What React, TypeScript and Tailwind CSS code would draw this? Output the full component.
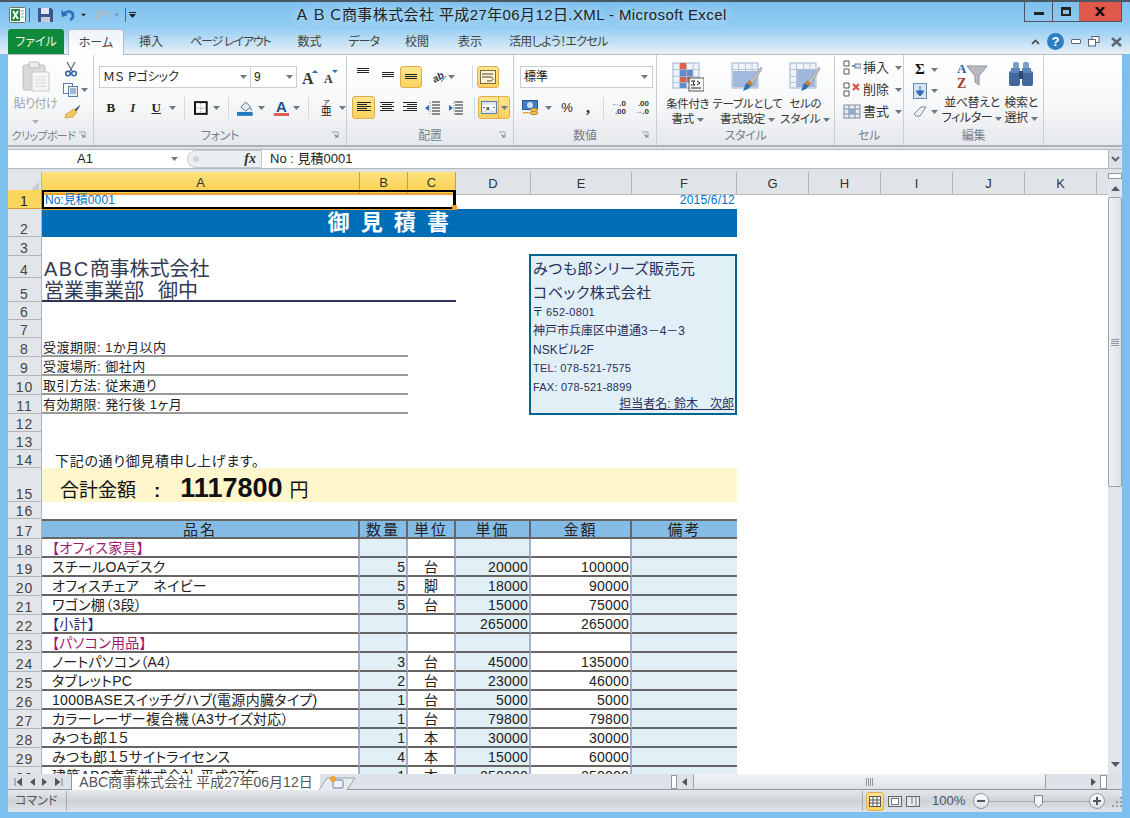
import type { ReactNode } from "react";

const items: { n: number; name?: string; kind?: "head" | "sub"; qty?: string; unit?: string; price?: string; amount?: string }[] = [
  { n: 18, name: "【オフィス家具】", kind: "head" },
  { n: 19, name: "スチールOAデスク", qty: "5", unit: "台", price: "20000", amount: "100000" },
  { n: 20, name: "オフィスチェア　ネイビー", qty: "5", unit: "脚", price: "18000", amount: "90000" },
  { n: 21, name: "ワゴン棚（3段）", qty: "5", unit: "台", price: "15000", amount: "75000" },
  { n: 22, name: "【小計】", kind: "sub", price: "265000", amount: "265000" },
  { n: 23, name: "【パソコン用品】", kind: "head" },
  { n: 24, name: "ノートパソコン（A4）", qty: "3", unit: "台", price: "45000", amount: "135000" },
  { n: 25, name: "タブレットPC", qty: "2", unit: "台", price: "23000", amount: "46000" },
  { n: 26, name: "1000BASEスイッチグハブ(電源内臓タイプ)", qty: "1", unit: "台", price: "5000", amount: "5000" },
  { n: 27, name: "カラーレーザー複合機（A3サイズ対応）", qty: "1", unit: "台", price: "79800", amount: "79800" },
  { n: 28, name: "みつも郎１５", qty: "1", unit: "本", price: "30000", amount: "30000" },
  { n: 29, name: "みつも郎１５サイトライセンス", qty: "4", unit: "本", price: "15000", amount: "60000" },
  { n: 30, name: "建築ABC商事株式会社 平成27年", qty: "1", unit: "本", price: "250000", amount: "250000" },
];

const tabs = [
  { label: "挿入", cls: "ml-[15px]" },
  { label: "ページ レイアウト", cls: "ml-[27px] tracking-[-1.2px]" },
  { label: "数式", cls: "ml-[27px]" },
  { label: "データ", cls: "ml-[27px] tracking-[-1px]" },
  { label: "校閲", cls: "ml-[26px]" },
  { label: "表示", cls: "ml-[29px]" },
  { label: "活用しよう！エクセル", cls: "ml-[27px] tracking-[-0.7px]" },
];

function Caret({ cls = "" }: { cls?: string }) {
  return (
    <svg width="7" height="4" viewBox="0 0 7 4" className={"shrink-0 " + cls}>
      <path d="M0 0h7L3.5 4z" fill="#6f7780" />
    </svg>
  );
}

function Lines({ rows, align, y = 0 }: { rows: number[]; align: "l" | "c" | "r"; y?: number }) {
  return (
    <svg width="16" height="14" viewBox="0 0 16 14">
      {rows.map((w, i) => {
        const x = align === "l" ? 1 : align === "c" ? 8 - w / 2 : 15 - w;
        return <rect key={i} x={x} y={y + i * 2 + 1} width={w} height="1" fill="#222" />;
      })}
    </svg>
  );
}

function Hi({ cls, children }: { cls: string; children: ReactNode }) {
  return (
    <div className={"flex items-center justify-center rounded-[3px] border border-[#e2ab4e] bg-gradient-to-b from-[#fde68f] to-[#fbd25c] " + cls}>
      {children}
    </div>
  );
}

function Sep({ cls = "" }: { cls?: string }) {
  return <div className={"h-[22px] w-px bg-[#d4d8dd] shrink-0 " + cls} />;
}

function Launcher() {
  return (
    <svg width="9" height="9" viewBox="0 0 9 9" className="absolute right-[6px] bottom-[5px]">
      <path d="M1 1h6v6" fill="none" stroke="#9aa4ae" />
      <path d="M3 3l3 3M4 6h2V4" fill="none" stroke="#6f7c8c" />
    </svg>
  );
}

function Group({ cls, label, launcher, children }: { cls: string; label: string; launcher?: boolean; children: ReactNode }) {
  return (
    <div className={"relative flex flex-col border-r border-[#c9ced4] shrink-0 " + cls}>
      <div className="flex-1 min-h-0">{children}</div>
      <div className="h-[20px] text-center text-[12px] leading-[22px] tracking-[-0.3px] whitespace-nowrap text-[#76828f]">
        <span className={label.length > 6 ? "mr-[14px] inline-block text-[11px] tracking-[-0.6px]" : ""}>{label}</span>
      </div>
      {launcher && <Launcher />}
    </div>
  );
}

function StyleIcon({ kind }: { kind: "cond" | "table" | "cell" }) {
  return (
    <svg width="32" height="30" viewBox="0 0 32 30">
      <rect x="1" y="1" width="26" height="25" fill="#eef3f9" stroke="#9db3cc" />
      {kind === "table" && <rect x="2" y="9" width="24" height="16" fill="#9db8dc" />}
      {kind === "cell" && <rect x="8" y="7" width="18" height="18" fill="#9db8dc" />}
      {kind === "cond" && (
        <>
          <rect x="8" y="1" width="7" height="7" fill="#dc5f50" />
          <rect x="8" y="8" width="13" height="7" fill="#5f8cc6" />
          <rect x="8" y="15" width="11" height="6" fill="#dc5f50" />
          <rect x="8" y="21" width="7" height="5" fill="#5f8cc6" />
        </>
      )}
      {[7.5, 14.5, 21].map((x) => (
        <path key={x} d={`M${x} 1v25`} stroke="#a9bdd4" strokeWidth="0.8" />
      ))}
      {[7.5, 14.5, 20.5].map((y) => (
        <path key={y} d={`M1 ${y}h26`} stroke="#a9bdd4" strokeWidth="0.8" />
      ))}
      {kind === "cond" ? (
        <>
          <rect x="17" y="16" width="15" height="13" fill="#f6f7f8" stroke="#555" />
          <path d="M19 19h4l-2 2 2 2h-4M25 19l3 2-3 2M19 26h10" fill="none" stroke="#222" />
        </>
      ) : (
        <>
          <path d="M30 5L19 19l3 3L31 7z" fill="#b9bdc4" stroke="#8c8f94" strokeWidth="0.5" />
          <path d="M18 18l4 4-2 2-5 3 1-6z" fill="#c77f2f" />
          <path d="M15 21l5 3-3 3-5 2z" fill="#2f6fb4" />
        </>
      )}
    </svg>
  );
}

function Ribbon() {
  return (
    <div className="flex h-[90px] shrink-0 bg-gradient-to-b from-[#ffffff] via-[#f8f9fa] to-[#e6e9ed] text-[12px] text-[#333]">
      <Group cls="w-[86px]" label="クリップボード" launcher>
        <div className="flex pt-[6px]">
          <div className="flex w-[55px] flex-col items-center">
            <svg width="28" height="31" viewBox="0 0 28 31">
              <rect x="1" y="4" width="22" height="25" rx="2" fill="#d9d9d9" stroke="#c1c1c1" />
              <rect x="7" y="1" width="10" height="6" rx="1" fill="#ececec" stroke="#bbb" />
              <rect x="10" y="11" width="17" height="19" fill="#f6f6f6" stroke="#c9c9c9" />
              <path d="M13 16h11M13 19h11M13 22h11M13 25h11" stroke="#d5d5d5" />
            </svg>
            <div className="mt-[3px] whitespace-nowrap tracking-[-0.5px] text-[#a2a2a2]">貼り付け</div>
            <Caret cls="mt-[7px] opacity-50" />
          </div>
          <div className="flex flex-col items-start">
            <svg width="14" height="16" viewBox="0 0 14 16" className="ml-[1px]">
              <path d="M3 1l5 9M11 1L6 10" stroke="#6b7280" strokeWidth="1.4" />
              <circle cx="4" cy="12.5" r="2.3" fill="none" stroke="#2e5fa8" strokeWidth="1.5" />
              <circle cx="10" cy="12.5" r="2.3" fill="none" stroke="#2e5fa8" strokeWidth="1.5" />
            </svg>
            <div className="mt-[6px] flex items-center">
              <svg width="16" height="14" viewBox="0 0 16 14">
                <rect x="0.5" y="0.5" width="9" height="10" fill="#fff" stroke="#5c7ea8" />
                <rect x="5.5" y="3.5" width="9" height="10" fill="#e7eef7" stroke="#5c7ea8" />
                <path d="M7 6h6M7 8h6M7 10h6" stroke="#5c7ea8" />
              </svg>
              <Caret cls="ml-[2px]" />
            </div>
            <svg width="18" height="15" viewBox="0 0 18 15" className="mt-[7px]">
              <path d="M17 1l-6 5 2 2 4-6z" fill="#46506a" />
              <path d="M11 5l3 3-4 5-8 1 1-4z" fill="#f0c860" stroke="#b88a2e" strokeWidth="0.6" />
            </svg>
          </div>
        </div>
      </Group>

      <Group cls="w-[253px]" label="フォント" launcher>
        <div className="pl-[5px] pt-[11px]">
          <div className="flex h-[22px] items-center">
            <div className="flex h-[22px] w-[152px] items-center justify-between border border-[#c9ced4] bg-white pl-[3px] pr-[3px] text-[12px] text-[#222]">
              ＭＳ Ｐゴシック
              <Caret />
            </div>
            <div className="flex h-[22px] w-[46px] items-center justify-between border border-l-0 border-[#c9ced4] bg-white pl-[3px] pr-[3px] text-[#222]">
              9
              <Caret />
            </div>
            <svg width="16" height="15" viewBox="0 0 16 15" className="ml-[5px]">
              <text x="0" y="14" fontSize="16" fontFamily="Liberation Serif" fontWeight="700" fill="#333">A</text>
              <path d="M10 3l3-3 3 3z" fill="#2e6fb4" />
            </svg>
            <svg width="15" height="14" viewBox="0 0 15 14" className="ml-[5px]">
              <text x="1" y="13" fontSize="12" fontFamily="Liberation Serif" fontWeight="700" fill="#333">A</text>
              <path d="M9 0l3 3 3-3z" fill="#2e6fb4" />
            </svg>
          </div>
          <div className="mt-[9px] flex h-[22px] items-center">
            <div className="w-[24px] text-center font-['Liberation_Serif'] text-[13px] font-bold text-[#222]">B</div>
            <div className="w-[21px] text-center font-['Liberation_Serif'] text-[13px] font-bold italic text-[#333]">I</div>
            <div className="w-[27px] text-center font-['Liberation_Serif'] text-[13px] font-bold text-[#222] underline">U</div>
            <Caret />
            <Sep cls="ml-[8px]" />
            <svg width="14" height="14" viewBox="0 0 14 14" className="ml-[9px]">
              <rect x="1" y="1" width="12" height="12" fill="#fff" stroke="#111" strokeWidth="2" />
              <path d="M7 2v10M2 7h10" stroke="#888" strokeDasharray="1 1" />
            </svg>
            <Caret cls="ml-[5px]" />
            <Sep cls="ml-[8px]" />
            <svg width="17" height="16" viewBox="0 0 17 16" className="ml-[8px]">
              <path d="M4 7l5-5 5 5-5 4z" fill="#e8edf3" stroke="#5c6a7c" />
              <path d="M14 7c1 2 2 3 1 4-1 0-2-2-1-4z" fill="#5c9cd6" />
              <rect x="0" y="12" width="16" height="4" fill="#1f7bc0" />
            </svg>
            <Caret cls="ml-[4px]" />
            <div className="relative ml-[9px] flex h-[16px] w-[16px] justify-center">
              <span className="font-['Liberation_Sans'] text-[15px] leading-[14px] font-bold text-[#1d4f91]">A</span>
              <div className="absolute inset-x-0 bottom-0 h-[3px] bg-[#e05a4e]" />
            </div>
            <Caret cls="ml-[4px]" />
            <Sep cls="ml-[8px]" />
            <div className="ml-[10px] flex w-[14px] flex-col items-center leading-none text-[#222]">
              <span className="text-[7px] leading-[7px]">ア</span>
              <span className="text-[11px] leading-[11px]">亜</span>
            </div>
            <Caret cls="ml-[6px]" />
          </div>
        </div>
      </Group>

      <Group cls="w-[167px]" label="配置" launcher>
        <div className="pl-[5px] pt-[11px]">
          <div className="flex h-[22px] items-center">
            <div className="flex w-[22px] justify-center">
              <div className="-mt-[6px]"><Lines rows={[12, 12, 12]} align="c" /></div>
            </div>
            <div className="flex w-[26px] justify-center pl-[2px]">
              <div className="mt-[2px]"><Lines rows={[12, 12, 12]} align="c" /></div>
            </div>
            <Hi cls="h-[22px] w-[22px] items-end">
              <div className="mt-[6px]"><Lines rows={[12, 12, 12]} align="c" /></div>
            </Hi>
            <svg width="16" height="14" viewBox="0 0 16 14" className="ml-[9px]">
              <text x="1" y="11" fontSize="10" fontFamily="Liberation Sans" fontStyle="italic" fontWeight="700" fill="#333" transform="rotate(-30 6 7)">ab</text>
              <path d="M10 12l5-6" stroke="#2e6fb4" />
            </svg>
            <Caret cls="ml-[1px]" />
            <Sep cls="ml-[17px]" />
            <Hi cls="ml-[4px] h-[22px] w-[22px]">
              <svg width="16" height="14" viewBox="0 0 16 14">
                <rect x="0.5" y="0.5" width="15" height="13" fill="#fdf3d0" stroke="#7a6a3a" />
                <path d="M2 4h11M2 7h8c4 0 4 4 0 4H7" fill="none" stroke="#444" />
              </svg>
            </Hi>
          </div>
          <div className="mt-[8px] flex h-[23px] items-center">
            <Hi cls="h-[23px] w-[23px]"><Lines rows={[14, 10, 14, 10, 14]} align="l" /></Hi>
            <div className="ml-[2px] flex w-[20px] justify-center"><Lines rows={[14, 10, 14, 10, 14]} align="c" /></div>
            <div className="ml-[3px] flex w-[20px] justify-center"><Lines rows={[14, 10, 14, 10, 14]} align="r" /></div>
            <svg width="16" height="14" viewBox="0 0 16 14" className="ml-[5px]">
              <path d="M7 1h8M7 4h8M7 7h8M7 10h8M7 13h8" stroke="#222" />
              <path d="M0 7l4-3v6z" fill="#2e6fb4" />
              <path d="M5 0v14" stroke="#888" strokeDasharray="1 1" />
            </svg>
            <svg width="16" height="14" viewBox="0 0 16 14" className="ml-[7px]">
              <path d="M7 1h8M7 4h8M7 7h8M7 10h8M7 13h8" stroke="#222" />
              <path d="M5 7L1 4v6z" fill="#2e6fb4" />
              <path d="M6 0v14" stroke="#888" strokeDasharray="1 1" />
            </svg>
            <Sep cls="ml-[10px]" />
            <div className="ml-[3px] flex h-[23px] w-[32px] rounded-[3px] border border-[#e2ab4e] bg-gradient-to-b from-[#fde68f] to-[#fbd25c]">
              <div className="flex w-[20px] items-center justify-center border-r border-[#e2ab4e]">
                <svg width="16" height="13" viewBox="0 0 16 13">
                  <rect x="0.5" y="0.5" width="15" height="12" fill="#dbe7f4" stroke="#5c7ea8" />
                  <rect x="1" y="4" width="14" height="5" fill="#fff" />
                  <text x="5" y="8.5" fontSize="6" fontFamily="Liberation Sans" fontWeight="700" fill="#222">a</text>
                  <path d="M2 6.5h2M12 6.5h2" stroke="#2e6fb4" />
                </svg>
              </div>
              <div className="flex flex-1 items-center justify-center"><Caret /></div>
            </div>
          </div>
        </div>
      </Group>

      <Group cls="w-[143px]" label="数値" launcher>
        <div className="pl-[6px] pt-[11px]">
          <div className="flex h-[22px] w-[133px] items-center justify-between border border-[#c9ced4] bg-white pl-[3px] pr-[4px] text-[#222]">
            標準
            <Caret />
          </div>
          <div className="mt-[9px] flex h-[22px] items-center">
            <svg width="18" height="16" viewBox="0 0 18 16" className="ml-[2px]">
              <rect x="0.5" y="0.5" width="15" height="9" fill="#3f7fc4" stroke="#29588f" />
              <circle cx="8" cy="5" r="3" fill="#cfe0f2" />
              <ellipse cx="12" cy="10" rx="4" ry="1.6" fill="#f0c050" stroke="#b88a2e" />
              <ellipse cx="12" cy="13" rx="4" ry="1.6" fill="#f0c050" stroke="#b88a2e" />
              <rect x="1" y="12" width="6" height="1.4" fill="#e0a030" />
            </svg>
            <Caret cls="ml-[5px]" />
            <div className="ml-[5px] w-[20px] text-center text-[13px] text-[#222]">%</div>
            <div className="ml-[4px] w-[14px] text-center font-['Liberation_Serif'] text-[16px] leading-[12px] font-bold text-[#222]">,</div>
            <Sep cls="ml-[8px]" />
            <div className="ml-[2px] flex w-[20px] flex-col items-end font-['Liberation_Sans'] text-[8px] leading-[8px] font-bold text-[#333]">
              <span><span className="text-[#2e6fb4]">←</span>.0</span>
              <span>.00</span>
            </div>
            <div className="ml-[3px] flex w-[20px] flex-col items-end font-['Liberation_Sans'] text-[8px] leading-[8px] font-bold text-[#333]">
              <span>.00</span>
              <span><span className="text-[#2e6fb4]">→</span>.0</span>
            </div>
          </div>
        </div>
      </Group>

      <Group cls="w-[178px]" label="スタイル">
        <div className="flex pt-[7px] text-center text-[11.5px] leading-[15px] tracking-[-0.3px]">
          <div className="flex w-[62px] flex-col items-center">
            <StyleIcon kind="cond" />
            <div className="mt-[5px] whitespace-nowrap">条件付き</div>
            <div className="flex items-center gap-[3px]">書式<Caret /></div>
          </div>
          <div className="flex w-[58px] flex-col items-center">
            <StyleIcon kind="table" />
            <div className="mt-[5px] whitespace-nowrap">テーブルとして</div>
            <div className="flex items-center gap-[3px] whitespace-nowrap">書式設定<Caret /></div>
          </div>
          <div className="flex w-[58px] flex-col items-center">
            <StyleIcon kind="cell" />
            <div className="mt-[5px] whitespace-nowrap">セルの</div>
            <div className="flex items-center gap-[3px] whitespace-nowrap">スタイル<Caret /></div>
          </div>
        </div>
      </Group>

      <Group cls="w-[69px]" label="セル">
        <div className="flex flex-col gap-[5px] pl-[8px] pt-[4px] text-[13px]">
          <div className="flex h-[17px] items-center">
            <svg width="18" height="15" viewBox="0 0 18 15">
              <path d="M1 1h5v5H1zM1 9h5v5H1z" fill="#fff" stroke="#555" />
              <path d="M9 6h4" stroke="#222" />
              <rect x="12" y="4" width="6" height="4" fill="#dfe7f2" stroke="#5c7ea8" />
            </svg>
            <span className="ml-[2px] whitespace-nowrap">挿入</span>
            <Caret cls="ml-[6px]" />
          </div>
          <div className="flex h-[17px] items-center">
            <svg width="18" height="15" viewBox="0 0 18 15">
              <path d="M1 1h5v5H1zM1 9h5v5H1z" fill="#fff" stroke="#555" />
              <path d="M10 2l6 6M16 2l-6 6" stroke="#d9503f" strokeWidth="2" />
            </svg>
            <span className="ml-[2px] whitespace-nowrap">削除</span>
            <Caret cls="ml-[6px]" />
          </div>
          <div className="flex h-[17px] items-center">
            <svg width="18" height="15" viewBox="0 0 18 15">
              <rect x="1" y="1" width="16" height="13" fill="#e8eef6" stroke="#7f8c9c" />
              <path d="M6 1v13M12 1v13M1 5h16M1 10h16" stroke="#7f8c9c" />
              <rect x="6" y="5" width="6" height="5" fill="#8fa9cc" />
            </svg>
            <span className="ml-[2px] whitespace-nowrap">書式</span>
            <Caret cls="ml-[6px]" />
          </div>
        </div>
      </Group>

      <Group cls="w-[140px]" label="編集">
        <div className="flex pt-[6px]">
          <div className="flex w-[40px] flex-col gap-[6px] pl-[9px] pt-[1px]">
            <div className="flex h-[15px] items-center">
              <span className="w-[14px] text-center font-['Liberation_Serif'] text-[15px] font-bold text-[#111]">Σ</span>
              <Caret cls="ml-[4px]" />
            </div>
            <div className="flex h-[15px] items-center">
              <svg width="14" height="16" viewBox="0 0 14 16">
                <rect x="0.5" y="0.5" width="13" height="15" fill="#d7e4f3" stroke="#6a8ab0" />
                <path d="M7 3v6M3 8h8L7 13z" fill="#2e6fb4" stroke="#2e6fb4" />
              </svg>
              <Caret cls="ml-[4px]" />
            </div>
            <div className="flex h-[15px] items-center">
              <svg width="14" height="12" viewBox="0 0 14 12">
                <path d="M1 8l7-7h5L7 10H3z" fill="#eef1f5" stroke="#7f8791" />
              </svg>
              <Caret cls="ml-[4px]" />
            </div>
          </div>
          <div className="flex w-[56px] flex-col items-center leading-[15px] tracking-[-0.4px]">
            <svg width="32" height="28" viewBox="0 0 32 28">
              <text x="1" y="12" fontSize="13" fontFamily="Liberation Serif" fontWeight="700" fill="#2e5fa8">A</text>
              <text x="1" y="27" fontSize="14" fontFamily="Liberation Serif" fontWeight="700" fill="#a83a30">Z</text>
              <path d="M11 5h20l-8 10v9l-4-3v-6z" fill="#b7bcc2" stroke="#8e949b" />
            </svg>
            <div className="mt-[7px] whitespace-nowrap">並べ替えと</div>
            <div className="flex items-center gap-[3px] whitespace-nowrap">フィルター<Caret /></div>
          </div>
          <div className="ml-[5px] flex w-[32px] flex-col items-center leading-[15px] tracking-[-0.4px]">
            <svg width="28" height="28" viewBox="0 0 28 28">
              <rect x="6" y="1" width="6" height="7" rx="2" fill="#7d9cc6" />
              <rect x="16" y="1" width="6" height="7" rx="2" fill="#7d9cc6" />
              <rect x="2" y="10" width="11" height="15" rx="2" fill="#41679c" />
              <rect x="15" y="10" width="11" height="15" rx="2" fill="#41679c" />
              <rect x="4" y="7" width="9" height="5" fill="#5f86bb" />
              <rect x="15" y="7" width="9" height="5" fill="#5f86bb" />
              <rect x="12" y="10" width="4" height="8" fill="#2d4a74" />
            </svg>
            <div className="mt-[7px] whitespace-nowrap">検索と</div>
            <div className="flex items-center gap-[3px] whitespace-nowrap">選択<Caret /></div>
          </div>
        </div>
      </Group>
      <div className="flex-1" />
    </div>
  );
}

function FormulaBar() {
  return (
    <div className="h-[27px] shrink-0 border-t-2 border-[#aeb3b9] bg-[#dfe3e8] pt-[2px]">
      <div className="flex h-[20px] items-stretch border-y border-[#b4b9bf] bg-white text-[14px] leading-[18px] text-[#222]">
        <div className="flex w-[179px] items-center">
          <div className="w-[154px] text-center text-[13px]">A1</div>
          <Caret cls="ml-[9px]" />
        </div>
        <div className="flex w-[75px] items-center bg-[#eceff2] rounded-l-full border border-[#c3c8ce]">
          <div className="ml-[5px] h-[6px] w-[6px] rounded-full bg-[#cfd4d9]" />
          <span className="ml-auto mr-[5px] font-['Liberation_Serif'] text-[14px] font-bold italic text-[#333]">fx</span>
        </div>
        <div className="flex-1 pl-[8px] text-[13px]">No : 見積0001</div>
        <div className="flex w-[14px] items-center justify-center border-l border-[#b4b9bf] bg-[#dfe3e8]">
          <svg width="9" height="6" viewBox="0 0 9 6"><path d="M1 1l3.5 3.5L8 1" fill="none" stroke="#606a75" strokeWidth="2" /></svg>
        </div>
      </div>
    </div>
  );
}

function RowHead({ n, active }: { n: number; active?: boolean }) {
  return (
    <div
      className={
        "flex min-h-0 items-end justify-center border-b border-r font-['Liberation_Sans'] text-[14px] leading-[14px] tracking-[1px] " +
        (active ? "border-[#d59a3e] bg-[#fbd65c] text-[#222]" : "border-[#b0b5ba] bg-[#e2e6eb] text-[#444]")
      }
    >
      {n}
    </div>
  );
}

// grid line is computed from the sheet row number
function Row({ n, active, children }: { n: number; active?: boolean; children?: ReactNode }) {
  return (
    <div className="col-span-full grid min-h-0 grid-cols-subgrid grid-rows-[minmax(0,1fr)]" style={{ gridRow: n + 1 }}>
      <RowHead n={n} active={active} />
      {children}
    </div>
  );
}

function Sheet() {
  const colHeads = ["A", "B", "C", "D", "E", "F", "G", "H", "I", "J", "K"];
  return (
    <div className="relative min-w-0 flex-1 overflow-hidden bg-white">
      <div className="grid grid-cols-[34px_318px_48px_48px_75px_101px_105px_72px_72px_72px_72px_72px_11px] grid-rows-[18px_19px_28px_19px_22px_24px_18px_18px_19px_19px_19px_19px_18px_18px_18px_34px_17px_20px_repeat(13,19px)]">
        <div className="col-span-full row-start-1 grid grid-cols-subgrid">
          <div className="flex items-end justify-end border-r border-b border-[#b0b5ba] bg-[#e2e6eb] p-[2px]">
            <svg width="10" height="10" viewBox="0 0 10 10"><path d="M10 0v10H0z" fill="#c4cad0" /></svg>
          </div>
          {colHeads.map((c, i) => (
            <div
              key={c}
              className={
                "flex items-center justify-center border-r pt-px font-['Liberation_Sans'] text-[13px] text-[#333] " +
                (i < 3
                  ? "border-[#d59a3e] border-b-2 border-b-[#f0a030] bg-gradient-to-b from-[#fde27c] to-[#fbd14f]"
                  : "border-[#b0b5ba] border-b bg-[#e0e4e9]")
              }
            >
              {c}
            </div>
          ))}
          <div className="border-b border-[#b0b5ba] bg-[#e0e4e9]" />
        </div>

        <Row n={1} active>
          <div className="relative z-10 col-span-3 flex items-center border-2 border-r-[3px] border-black pl-[1px] text-[12px] text-[#0070c0] shadow-[0_1px_0_#f0a030]">
            No:見積<span className="tracking-[.2px]">0001</span>
            <div className="absolute -right-[4px] -bottom-[3px] h-[5px] w-[5px] bg-[#f0a030]" />
          </div>
          <div className="col-start-6 col-span-2 flex items-center justify-end pr-[2px] text-[12px] tracking-[.2px] text-[#0070c0]">2015/6/12</div>
        </Row>
        <Row n={2}>
          <div className="col-span-6 flex min-h-0 items-center justify-center bg-[#006eb6] text-[22px] leading-none font-bold tracking-[2.5px] text-white">御 見 積 書</div>
        </Row>
        <Row n={3} />
        <Row n={4}>
          <div className="col-span-3 flex min-h-0 items-end pl-[2px] text-[20px] leading-[18px] text-[#333b55]"><span className="tracking-[1.5px]">ABC</span>商事株式会社</div>
        </Row>
        <Row n={5}>
          <div className="col-span-3 flex min-h-0 items-end border-b-2 border-[#2c3555] pl-[2px] text-[20px] leading-[18px] text-[#333b55]">営業事業部<span className="ml-[14px]">御中</span></div>
        </Row>
        <Row n={6} />
        <Row n={7} />
        {["受渡期限: 1か月以内", "受渡場所: 御社内", "取引方法: 従来通り", "有効期限: 発行後 1ヶ月"].map((t, i) => (
          <Row key={t} n={8 + i}>
            <div className="col-span-2 flex min-h-0 items-end border-b-2 border-[#999] pl-[1px] text-[13px] leading-[14px] tracking-[.5px] text-[#222]">{t}</div>
          </Row>
        ))}
        <Row n={12} />
        <Row n={13} />
        <Row n={14}>
          <div className="col-span-3 flex min-h-0 items-end pl-[13px] text-[14px] leading-[14px] tracking-[.7px] text-[#222]">下記の通り御見積申し上げます。</div>
        </Row>
        <Row n={15}>
          <div className="col-span-6 flex min-h-0 items-end bg-[#fff6cc] pl-[18px] text-[19px] leading-[22px] text-[#111]">
            合計金額
            <span className="ml-[18px] font-bold">:</span>
            <span className="ml-[20px] font-['Liberation_Sans'] text-[27px] leading-[28px] font-bold">1117800</span>
            <span className="ml-[7px]">円</span>
          </div>
        </Row>
        <Row n={16} />
        <Row n={17}>
          {["品名", "数量", "単位", "単価", "金額", "備考"].map((h, i) => (
            <div
              key={h}
              className={
                "flex min-h-0 items-center justify-center border-t-2 border-b-2 border-[#666] bg-[#85bce6] text-[15px] leading-none tracking-[2px] text-[#222] " +
                (i < 5 ? "border-r-2" : "")
              }
            >
              {h}
            </div>
          ))}
        </Row>
        {items.map((it) => (
          <Row key={it.n} n={it.n}>
            <div
              className={
                "flex min-h-0 items-center border-r-2 border-b-2 border-r-[#a9add0] border-b-[#666] pt-[2px] pl-[10px] text-[14px] leading-[15px] tracking-[.3px] whitespace-nowrap " +
                (it.kind === "head" ? "text-[#a0186e]" : it.kind === "sub" ? "text-[#1c2d80]" : "text-[#222]")
              }
            >
              {it.name}
            </div>
            <div className="flex min-h-0 items-center justify-end border-r-2 border-b-2 border-r-[#a9add0] border-b-[#666] bg-[#e1eff6] pt-[2px] pr-[1px] text-[14px] leading-[15px] text-[#222]">{it.qty}</div>
            <div className="flex min-h-0 items-center justify-center border-r-2 border-b-2 border-r-[#a9add0] border-b-[#666] pt-[2px] text-[14px] leading-[15px] text-[#222]">{it.unit}</div>
            <div className="flex min-h-0 items-center justify-end border-r-2 border-b-2 border-r-[#a9add0] border-b-[#666] bg-[#e1eff6] pt-[2px] pr-[1px] text-[14px] leading-[15px] tracking-[.2px] text-[#222]">{it.price}</div>
            <div className="flex min-h-0 items-center justify-end border-r-2 border-b-2 border-r-[#a9add0] border-b-[#666] pt-[2px] pr-[1px] text-[14px] leading-[15px] tracking-[.2px] text-[#222]">{it.amount}</div>
            <div className="min-h-0 border-b-2 border-b-[#666] bg-[#e1eff6]" />
          </Row>
        ))}

        <div className="z-10 col-start-6 col-span-2 row-start-5 row-span-8 -mt-[2px] -ml-[2px] -mb-[1px] flex flex-col border-2 border-[#00648f] bg-[#e1eff6] pl-[2px] text-[#2a2f5c]">
          <div className="h-[24px] text-[15px] leading-[26px] tracking-[.5px]">みつも郎シリーズ販売元</div>
          <div className="h-[24px] text-[15px] leading-[26px] tracking-[.5px]">コベック株式会社</div>
          <div className="h-[19px] text-[11px] leading-[17px] tracking-[.3px]">〒 652-0801</div>
          <div className="h-[19px] text-[12px] leading-[18px]">神戸市兵庫区中道通3－4－3</div>
          <div className="h-[19px] text-[12px] leading-[18px]">NSKビル2F</div>
          <div className="h-[19px] text-[11px] leading-[18px] tracking-[.2px]">TEL: 078-521-7575</div>
          <div className="h-[19px] text-[11px] leading-[18px] tracking-[.2px]">FAX: 078-521-8899</div>
          <div className="flex-1 pr-[1px] text-right text-[12px] leading-[17px] underline">担当者名: 鈴木　次郎</div>
        </div>
      </div>
    </div>
  );
}

function VScroll() {
  return (
    <div className="flex w-[14px] shrink-0 flex-col items-center bg-[#e2e6eb]">
      <div className="mt-px h-[6px] w-[14px] border border-[#8f979f] bg-white" />
      <div className="flex h-[18px] items-center justify-center">
        <svg width="9" height="5" viewBox="0 0 9 5"><path d="M0 5h9L4.5 0z" fill="#4f5a66" /></svg>
      </div>
      <div className="flex h-[290px] w-[14px] items-center justify-center rounded-[2px] border border-[#99a1a9] bg-gradient-to-r from-[#f0f2f5] to-[#dde1e6]">
        <svg width="8" height="7" viewBox="0 0 8 7"><path d="M0 .5h8M0 2.5h8M0 4.5h8M0 6.5h8" stroke="#8f979f" /></svg>
      </div>
      <div className="flex-1" />
      <div className="mb-[5px] flex h-[10px] items-center justify-center">
        <svg width="9" height="5" viewBox="0 0 9 5"><path d="M0 0h9L4.5 5z" fill="#4f5a66" /></svg>
      </div>
    </div>
  );
}

function SheetBar() {
  return (
    <div className="flex h-[16px] shrink-0 items-center border-b border-[#8f979f] bg-[#dde2e9]">
      <div className="flex w-[63px] items-center gap-[7px] pl-[6px]">
        <svg width="8" height="8" viewBox="0 0 8 8"><path d="M1 0v8M8 0v8L3 4z" fill="#555" stroke="#555" strokeWidth="0.7" /></svg>
        <svg width="6" height="8" viewBox="0 0 6 8"><path d="M6 0v8L1 4z" fill="#555" /></svg>
        <svg width="6" height="8" viewBox="0 0 6 8"><path d="M0 0v8l5-4z" fill="#555" /></svg>
        <svg width="8" height="8" viewBox="0 0 8 8"><path d="M7 0v8M0 0v8l5-4z" fill="#555" stroke="#555" strokeWidth="0.7" /></svg>
      </div>
      <div className="flex h-[16px] w-[249px] items-center justify-center border-l border-[#8f979f] bg-white text-[14px] leading-[16px] whitespace-nowrap text-[#555]">
        ABC商事株式会社 平成27年06月12日
      </div>
      <svg width="42" height="16" viewBox="0 0 42 16" className="-ml-[1px] shrink-0">
        <path d="M0 16L8 4h28l-8 12" fill="#e7ebf0" stroke="#9aa2ab" />
        <rect x="14" y="6" width="10" height="8" rx="1" fill="#eef3f9" stroke="#5c7ea8" />
        <circle cx="14" cy="5" r="3" fill="#f0a030" />
      </svg>
      <div className="w-[310px] shrink-0" />
      <div className="h-[14px] w-[6px] shrink-0 border border-[#8f979f] bg-white" />
      <svg width="5" height="8" viewBox="0 0 5 8" className="ml-[5px] shrink-0"><path d="M5 0v8L0 4z" fill="#555" /></svg>
      <div className="ml-[6px] h-[15px] w-[353px] shrink-0 rounded-[2px] border-x border-[#9aa2ab] bg-gradient-to-b from-[#f1f3f6] to-[#dfe3e8]">
        <div className="flex h-full items-center justify-center">
          <svg width="7" height="8" viewBox="0 0 7 8"><path d="M.5 0v8M2.5 0v8M4.5 0v8M6.5 0v8" stroke="#8f979f" /></svg>
        </div>
      </div>
      <div className="flex-1" />
      <svg width="5" height="8" viewBox="0 0 5 8"><path d="M0 0v8l5-4z" fill="#555" /></svg>
      <div className="mr-[15px] ml-[4px] h-[14px] w-[7px] border border-[#8f979f] bg-white" />
    </div>
  );
}

function StatusBar() {
  return (
    <div className="flex h-[22px] shrink-0 items-center bg-gradient-to-b from-[#e6e8eb] via-[#cfd3d8] to-[#e0e3e7] text-[12px] text-[#555]">
      <div className="ml-[7px] w-[44px] whitespace-nowrap">コマンド</div>
      <div className="ml-[7px] h-[20px] w-px bg-[#a7adb4]" />
      <div className="flex-1" />
      <div className="h-[20px] w-px bg-[#a7adb4]" />
      <Hi cls="ml-[3px] h-[19px] w-[18px]">
        <svg width="12" height="11" viewBox="0 0 12 11"><rect x=".5" y=".5" width="11" height="10" fill="#fff" stroke="#555" /><path d="M4 0v11M8 0v11M0 4h12M0 7h12" stroke="#555" /></svg>
      </Hi>
      <svg width="14" height="11" viewBox="0 0 14 11" className="ml-[4px]">
        <rect x=".5" y=".5" width="13" height="10" fill="#e6e9ec" stroke="#666" />
        <rect x="3.5" y="2.5" width="7" height="6" fill="#fff" stroke="#777" />
      </svg>
      <svg width="14" height="11" viewBox="0 0 14 11" className="ml-[4px]">
        <rect x=".5" y=".5" width="13" height="10" fill="#e6e9ec" stroke="#666" />
        <path d="M6 0v8M10 0v11" stroke="#777" />
      </svg>
      <div className="ml-[12px] w-[34px] font-['Liberation_Sans'] text-[13px] text-[#3d5570]">100%</div>
      <div className="ml-[7px] flex h-[16px] w-[16px] items-center justify-center rounded-full border border-[#8f979f] bg-gradient-to-b from-white to-[#dde1e6]">
        <div className="h-[2px] w-[8px] bg-[#555]" />
      </div>
      <div className="relative h-px w-[100px] bg-[#aab0b7]">
        <svg width="9" height="13" viewBox="0 0 9 13" className="absolute -top-[6px] left-[45px]">
          <path d="M.5.5h8v8l-4 4-4-4z" fill="#f4f5f7" stroke="#7f8791" />
        </svg>
      </div>
      <div className="relative flex h-[16px] w-[16px] items-center justify-center rounded-full border border-[#8f979f] bg-gradient-to-b from-white to-[#dde1e6]">
        <div className="h-[2px] w-[8px] bg-[#555]" />
        <div className="absolute h-[8px] w-[2px] bg-[#555]" />
      </div>
      <svg width="11" height="11" viewBox="0 0 11 11" className="ml-[7px] mr-[-1px]">
        <path d="M8 1h2v2H8zM4 5h2v2H4zM8 5h2v2H8zM0 9h2v2H0zM4 9h2v2H4zM8 9h2v2H8z" fill="#9aa2ab" />
      </svg>
    </div>
  );
}

export default function App() {
  return (
    <div className="flex h-[818px] w-[1130px] flex-col overflow-hidden bg-[#7cc1ee] font-['Liberation_Sans','Noto_Sans_CJK_JP',sans-serif] [font-feature-settings:'palt']">
      <div className="relative h-[54px] shrink-0 border-t-2 border-[#4a5661] bg-gradient-to-b from-[#7cc0ee] via-[#94cdf2] to-[#e8f0f7] px-2">
        <div className="flex h-[25px] items-center">
          <svg width="17" height="16" viewBox="0 0 17 16" className="ml-[1px] shrink-0">
            <rect x=".5" y=".5" width="16" height="15" rx="1" fill="#fff" stroke="#6b7a68" />
            <rect x="2" y="2" width="9" height="12" fill="#1e8a43" />
            <path d="M4 4l5 8M9 4l-5 8" stroke="#fff" strokeWidth="1.8" />
            <path d="M12 4h3M12 7h3M12 10h3" stroke="#7faf8d" />
          </svg>
          <div className="ml-[3px] h-[14px] w-px bg-[#566573]" />
          <svg width="15" height="14" viewBox="0 0 15 14" className="ml-[8px]">
            <path d="M0 0h13l2 2v12H0z" fill="#3d5890" />
            <rect x="3" y="0" width="8" height="6" fill="#dfe8f2" />
            <rect x="3" y="9" width="9" height="5" fill="#c8ccd6" />
          </svg>
          <svg width="14" height="12" viewBox="0 0 14 12" className="ml-[8px]">
            <path d="M3 5c3-4 9-3 9 2 0 2-1 3-3 4" fill="none" stroke="#2f6fb4" strokeWidth="2.6" />
            <path d="M0 1l1 7 6-2z" fill="#2f6fb4" />
          </svg>
          <Caret cls="ml-[5px] scale-75 [&>path]:fill-[#222]" />
          <svg width="14" height="12" viewBox="0 0 14 12" className="ml-[8px]">
            <path d="M11 5C8 1 2 2 2 7c0 2 1 3 3 4" fill="none" stroke="#a8bccb" strokeWidth="2.6" />
            <path d="M14 1l-1 7-6-2z" fill="#a8bccb" />
          </svg>
          <Caret cls="ml-[4px] scale-75 opacity-60" />
          <div className="ml-[5px] h-[14px] w-px bg-[#566573]" />
          <svg width="7" height="6" viewBox="0 0 7 6" className="ml-[3px]">
            <path d="M0 0h7v1H0zM0 2h7L3.5 6z" fill="#222" />
          </svg>
          <div className="mt-px ml-[160px] text-[15px] tracking-[.4px] whitespace-nowrap text-[#222] [text-shadow:0_0_8px_#e4f2fb]">
            Ａ Ｂ Ｃ商事株式会社 平成27年06月12日.XML - Microsoft Excel
          </div>
        </div>

        {/* caption buttons */}
        <div className="absolute top-0 right-2 flex h-[20px] w-[98px] border-x border-b border-[#4a5661] text-[#111]">
          <div className="flex w-[28px] items-center justify-center border-r border-[#4a5661]">
            <div className="mt-[4px] h-[3px] w-[10px] bg-[#222]" />
          </div>
          <div className="flex w-[26px] items-center justify-center">
            <div className="h-[9px] w-[10px] border-2 border-t-[3px] border-[#222]" />
          </div>
          <div className="flex flex-1 items-center justify-center bg-[#e0584c]">
            <svg width="10" height="9" viewBox="0 0 10 9"><path d="M1 0l8 9M9 0L1 9" stroke="#111" strokeWidth="2.4" /></svg>
          </div>
        </div>

        <div className="flex h-[27px] items-end text-[12px] text-[#444]">
          <div className="flex h-[25px] w-[56px] items-center justify-center rounded-t-[3px] bg-[#0f8a3c] text-[#e7f5ea]">ファイル</div>
          <div className="relative top-px ml-[4px] flex h-[26px] w-[56px] items-center justify-center rounded-t-[3px] border-x border-t border-[#b4bbc2] bg-gradient-to-b from-[#eef4fa] to-white">ホーム</div>
          {tabs.map((t) => (
            <div key={t.label} className={"flex h-[25px] items-center whitespace-nowrap " + t.cls}>{t.label}</div>
          ))}
          <div className="flex-1" />
          <div className="flex h-[25px] items-center">
            <svg width="9" height="6" viewBox="0 0 9 6"><path d="M1 5l3.5-3.5L8 5" fill="none" stroke="#444" strokeWidth="1.6" /></svg>
            <div className="ml-[7px] flex h-[17px] w-[17px] items-center justify-center rounded-full bg-[#2f7fc4] font-['Liberation_Sans'] text-[13px] font-bold text-white">?</div>
            <div className="ml-[7px] h-[5px] w-[10px] rounded-[1px] border border-[#5b6670] bg-white" />
            <svg width="12" height="11" viewBox="0 0 12 11" className="ml-[7px]">
              <rect x="4" y=".5" width="7" height="6" fill="#fff" stroke="#5b6670" />
              <rect x=".5" y="3.5" width="7" height="6.5" fill="#fff" stroke="#5b6670" />
            </svg>
            <svg width="11" height="10" viewBox="0 0 11 10" className="ml-[11px]"><path d="M1 1l9 8M10 1L1 9" stroke="#5b6670" strokeWidth="2.4" /></svg>
          </div>
        </div>
      </div>

      <div className="flex min-h-0 flex-1 flex-col px-2 pb-[6px]">
        <div className="border-t border-[#b4bbc2]" />
        <Ribbon />
        <FormulaBar />
        <div className="flex min-h-0 flex-1">
          <Sheet />
          <VScroll />
        </div>
        <SheetBar />
        <StatusBar />
      </div>
    </div>
  );
}
